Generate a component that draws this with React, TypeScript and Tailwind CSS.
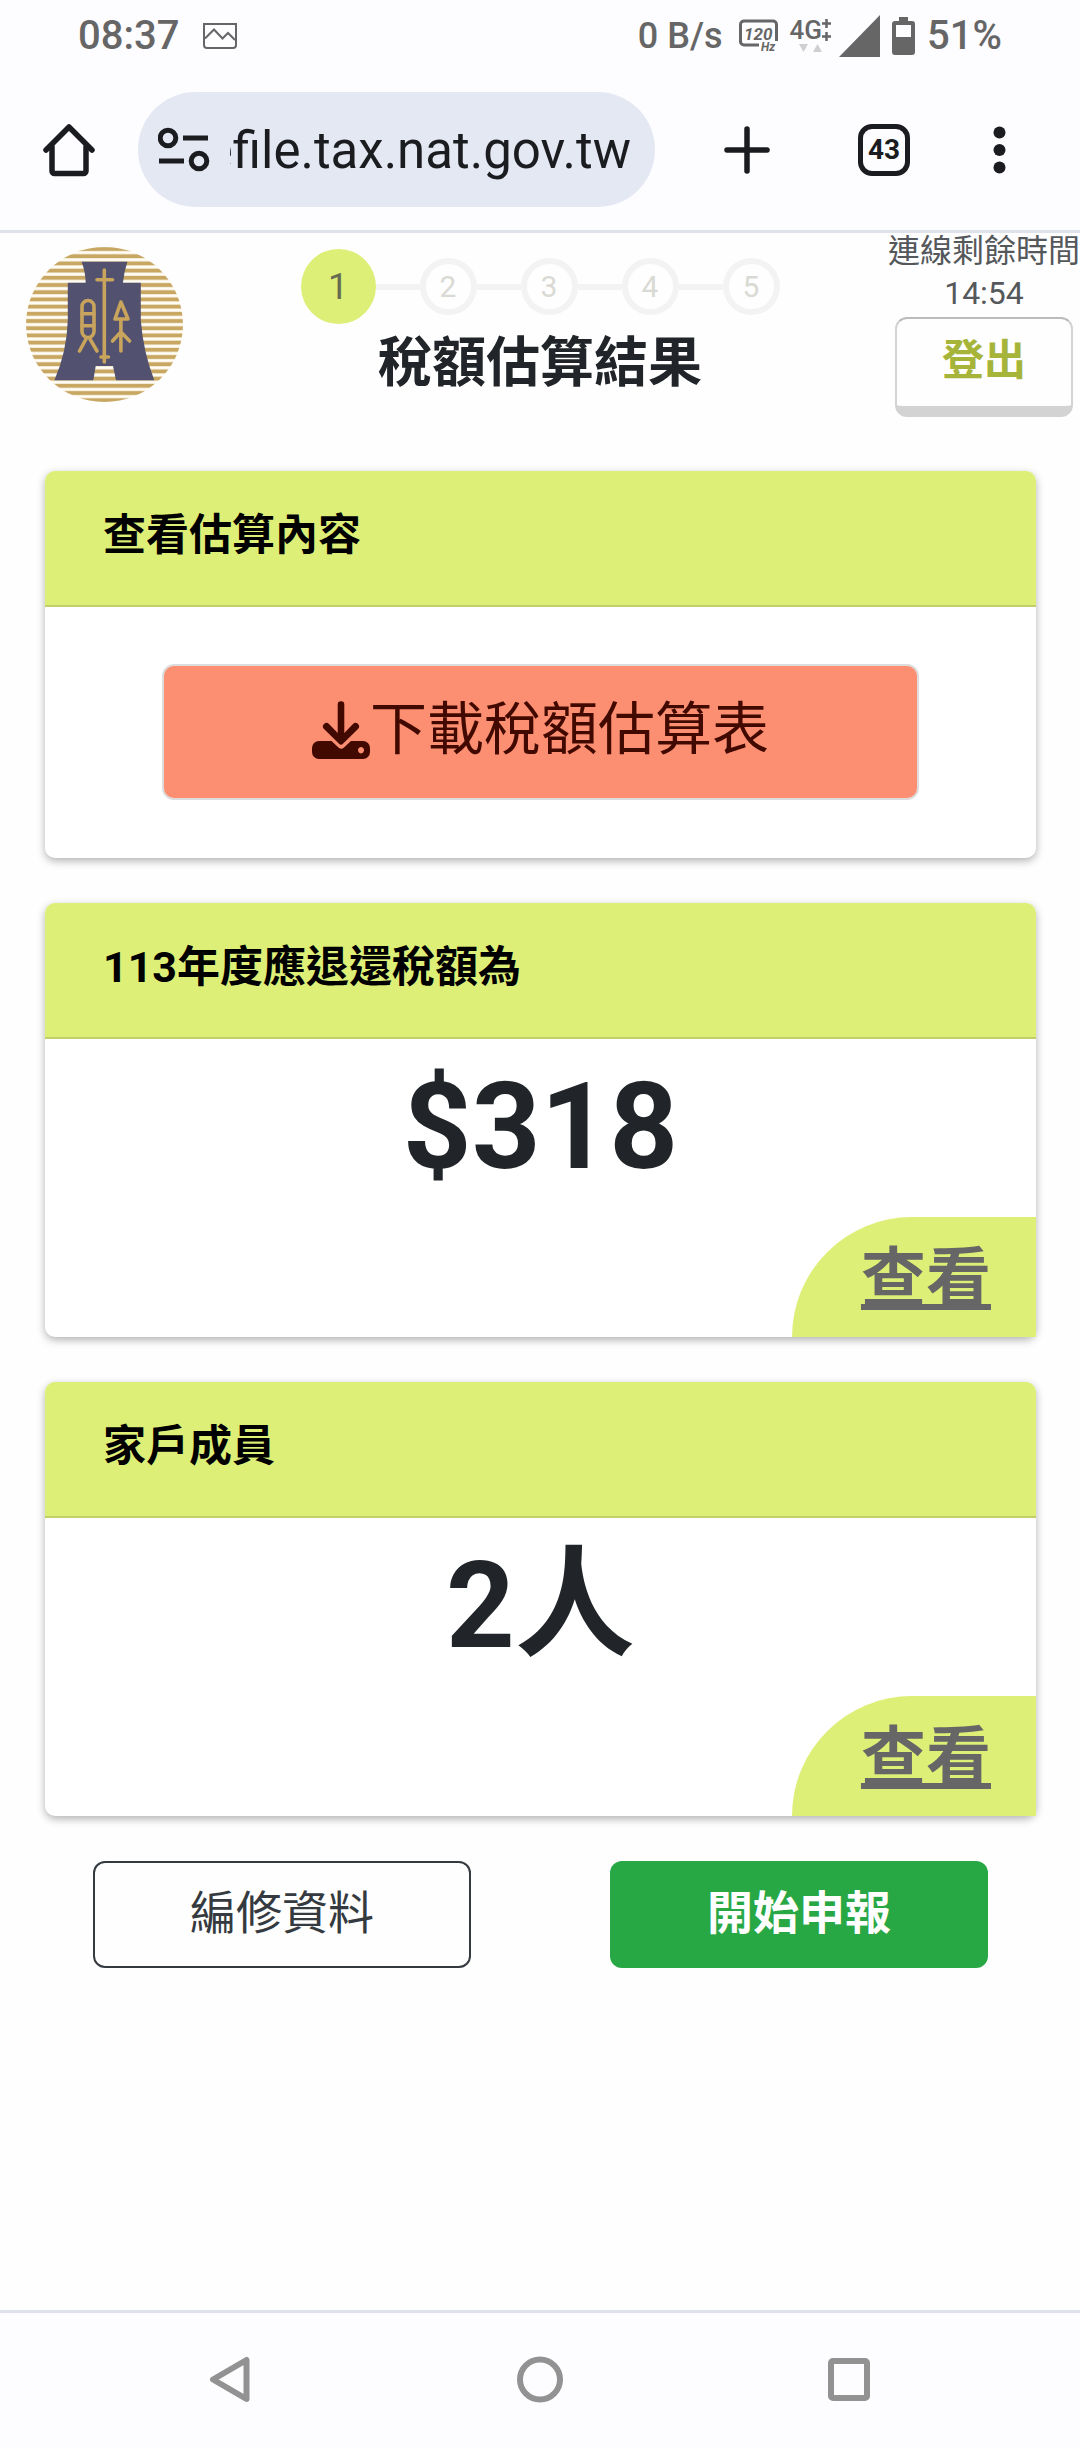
import type { ReactNode } from 'react'

const steps = [1, 2, 3, 4, 5]
const currentStep = 1

function StatusBar() {
  return (
    <div className="flex items-center justify-between pt-3 pr-[78px] pl-[78px] text-[#666666]">
      <div className="flex h-12 items-center gap-6">
        <span className="text-[40px] leading-[48px] font-medium">08:37</span>
        <svg width="34" height="26" viewBox="0 0 34 26" fill="none" stroke="currentColor" strokeWidth="2">
          <path d="M1 1h32v21a3 3 0 0 1-3 3H4a3 3 0 0 1-3-3z" />
          <path d="M2 15.500L11 6.500l8.500 9L25 10l7 7" />
        </svg>
      </div>
      <div className="flex h-12 items-center">
        <span className="text-[36px] leading-[48px] font-medium">0 B/s</span>
        <svg className="ml-4" width="39" height="34" viewBox="0 0 39 34" fill="none">
          <path d="M20 26H5a3.500 3.500 0 0 1-3.500-3.500v-17A3.500 3.500 0 0 1 5 2h29a3.500 3.500 0 0 1 3.500 3.500V22" stroke="currentColor" strokeWidth="3" />
          <text x="5" y="20.500" fontSize="17" fontWeight="700" fontStyle="italic" fill="currentColor">120</text>
          <text x="22" y="32" fontSize="12" fontWeight="700" fontStyle="italic" fill="currentColor">Hz</text>
        </svg>
        <div className="ml-3 flex flex-col items-center pb-1">
          <span className="flex items-center text-[26px] leading-7 font-medium">
            4G
            <svg width="9" height="24" viewBox="0 0 9 24" stroke="currentColor" strokeWidth="2.500" fill="none">
              <path d="M4.500 1v9M0 5.500h9M4.500 14v9M0 18.500h9" />
            </svg>
          </span>
          <svg width="23" height="8" viewBox="0 0 23 8" fill="#cfcfcf">
            <path d="M0 0h9L4.500 8zM14 8h9L18.500 0z" />
          </svg>
        </div>
        <svg className="ml-2" width="41" height="42" viewBox="0 0 41 42" fill="currentColor">
          <path d="M41 0v42H0z" />
        </svg>
        <svg className="ml-3" width="23" height="38" viewBox="0 0 23 38" fill="currentColor" fillRule="evenodd">
          <path d="M7 0h9v4h4a3 3 0 0 1 3 3v28a3 3 0 0 1-3 3H3a3 3 0 0 1-3-3V7a3 3 0 0 1 3-3h4zM4 8v12h15V8z" />
        </svg>
        <span className="ml-3 text-[40px] leading-[48px] font-medium">51%</span>
      </div>
    </div>
  )
}

function BrowserBar() {
  return (
    <div className="flex items-center pt-8 pr-[74px] pb-[23px] pl-[43px] text-[#1a1c20]">
      <button type="button" aria-label="首頁">
        <svg width="52" height="54" viewBox="0 0 52 54" fill="none" stroke="currentColor" strokeWidth="5.500" strokeLinejoin="round" strokeLinecap="round">
          <path d="M3 27L26 4l23 23" />
          <path d="M9 24v24a2.500 2.500 0 0 0 2.500 2.500h29A2.500 2.500 0 0 0 43 48V24" />
        </svg>
      </button>
      <div className="ml-[43px] flex h-[115px] min-w-0 flex-1 items-center rounded-full bg-[#e4e8f2] pr-6 pl-5">
        <svg className="shrink-0" width="52" height="46" viewBox="0 0 52 46" fill="none" stroke="currentColor" strokeWidth="5">
          <circle cx="10" cy="11" r="7.800" />
          <path d="M25 11h25M1 34h25" />
          <circle cx="41" cy="34" r="7.800" />
        </svg>
        <input
          type="text"
          aria-label="網址"
          dir="rtl"
          readOnly
          value="efile.tax.nat.gov.tw"
          className="mt-1 ml-5 h-16 w-full min-w-0 bg-transparent text-[51px] outline-none"
        />
      </div>
      <button type="button" aria-label="新分頁" className="ml-[69px]">
        <svg width="46" height="48" viewBox="0 0 46 48" stroke="currentColor" strokeWidth="5.500" strokeLinecap="round">
          <path d="M23 3v42M3 24h40" />
        </svg>
      </button>
      <button
        type="button"
        aria-label="分頁"
        className="ml-[88px] flex h-[52px] w-[52px] items-center justify-center rounded-[14px] border-[5px] border-current text-[28px] leading-8 font-bold"
      >
        43
      </button>
      <button type="button" aria-label="選單" className="ml-[83px]">
        <svg width="13" height="48" viewBox="0 0 13 48" fill="currentColor">
          <circle cx="6.500" cy="6.500" r="6" />
          <circle cx="6.500" cy="24" r="6" />
          <circle cx="6.500" cy="41.500" r="6" />
        </svg>
      </button>
    </div>
  )
}

function Logo() {
  return (
    <svg width="158" height="158" viewBox="0 0 158 158" role="img" aria-label="財政部">
      <defs>
        <clipPath id="disc">
          <ellipse cx="78.500" cy="78.500" rx="78.500" ry="77.500" />
        </clipPath>
        <pattern id="stripes" width="158" height="7.200" y="-0.600" patternUnits="userSpaceOnUse">
          <rect width="158" height="7.200" fill="#fffdf5" />
          <rect y="1.600" width="158" height="4" fill="#c8a762" />
        </pattern>
      </defs>
      <rect width="158" height="158" fill="url(#stripes)" clipPath="url(#disc)" />
      <path
        d="M55.600 15.700H101.400Q98 26 96.900 36.700H114.800V74Q117 105 128.300 134.300H90L87 120H69.700L67.300 134.300H28.400Q41 105 41.800 74V36.700H59.700Q59.500 26 55.600 15.700z"
        fill="#525170"
      />
      <g fill="none" stroke="#c8a45c" strokeWidth="3.600" strokeLinecap="round" strokeLinejoin="round">
        <path d="M78.300 24V116M71 33.700h15.500M75 111h7.500" />
        <rect x="56" y="54.500" width="12" height="37" rx="6" />
        <path d="M56 67.700h12M56 79.700h12M60 93L53.500 105M64 93L71 105" />
        <path d="M94.900 56L89 73h13zM94.900 73v32M86.500 95l8.400-9 8.700 9" />
      </g>
    </svg>
  )
}

function SiteHeader() {
  return (
    <header className="grid grid-cols-[1fr_auto_1fr] items-start">
      <div className="pt-[13px] pl-[26px]">
        <Logo />
      </div>
      <div className="flex flex-col items-center pt-4">
        <ol className="flex items-center">
          {steps.map((step) => (
            <li key={step} className="flex items-center">
              {step > 1 && <span className="h-[6px] w-11 bg-[#f3f3f3]" />}
              {step === currentStep ? (
                <span className="flex h-[75px] w-[75px] items-center justify-center rounded-full bg-[#ddef76] text-[36px] text-[#666b51]">
                  {step}
                </span>
              ) : (
                <span className="flex h-[57px] w-[57px] items-center justify-center rounded-full border-[6px] border-[#f3f3f3] text-[30px] text-[#d9dad3]">
                  {step}
                </span>
              )}
            </li>
          ))}
        </ol>
        <h1 className="text-[54px] leading-[80px] font-bold">稅額估算結果</h1>
      </div>
      <div className="flex flex-col items-center justify-self-end whitespace-nowrap">
        <span className="text-[32px] leading-9 text-[#55585b]">連線剩餘時間</span>
        <span className="text-[32px] leading-[48px] text-[#55585b]">14:54</span>
        <button
          type="button"
          className="flex h-[100px] w-[178px] items-center justify-center rounded-xl border-2 border-b-[11px] border-[#d3d3d3] border-t-[#bbbbbb] pb-1 text-[42px] leading-[56px] font-bold text-[#a6b43a]"
        >
          登出
        </button>
      </div>
    </header>
  )
}

function Card({ title, children }: { title: string; children: ReactNode }) {
  return (
    <section className="rounded-[10px] bg-white shadow-[0_3px_8px_rgba(0,0,0,0.3)]">
      <h2 className="h-[136px] rounded-t-[10px] border-b-2 border-[#c3cf69] bg-[#ddef76] px-[58px] pt-[34px] text-[43px] leading-[60px] font-bold text-black">
        {title}
      </h2>
      {children}
    </section>
  )
}

function ResultCard({ title, value }: { title: string; value: string }) {
  return (
    <Card title={title}>
      <p className="pt-[18px] text-center text-[120px] leading-[140px] font-bold">{value}</p>
      <div className="mt-5 flex justify-end">
        <a
          href="#"
          className="flex h-[120px] w-[244px] items-center justify-center rounded-tl-[120px] bg-[#ddef76] pt-1 pl-6 text-[65px] leading-[96px] font-bold text-[#666666] underline decoration-[6px]"
        >
          查看
        </a>
      </div>
    </Card>
  )
}

function NavBar() {
  return (
    <nav className="flex items-center justify-between border-t-[3px] border-[#dfe2eb] bg-[#fdfcff] px-[208px] pt-[43px] pb-[45px] text-[#929292]">
      <button type="button" aria-label="返回">
        <svg width="46" height="47" viewBox="0 0 46 47" fill="none" stroke="currentColor" strokeWidth="6" strokeLinejoin="round">
          <path d="M38.500 4v39L5 23.500z" />
        </svg>
      </button>
      <button type="button" aria-label="主畫面">
        <svg width="46" height="47" viewBox="0 0 46 47" fill="none" stroke="currentColor" strokeWidth="6">
          <circle cx="23" cy="23.500" r="20" />
        </svg>
      </button>
      <button type="button" aria-label="最近使用">
        <svg width="46" height="47" viewBox="0 0 46 47" fill="none" stroke="currentColor" strokeWidth="6">
          <rect x="5" y="5" width="36" height="37" rx="2" />
        </svg>
      </button>
    </nav>
  )
}

export default function App() {
  return (
    <div className="flex min-h-screen flex-col bg-[#fefefe] font-[Roboto,'Noto_Sans_CJK_TC',sans-serif] text-[#212529]">
      <div className="border-b-[3px] border-[#dfe2eb] bg-[#fdfcff]">
        <StatusBar />
        <BrowserBar />
      </div>

      <SiteHeader />

      <main className="flex flex-1 flex-col gap-[45px] pt-[54px] pr-11 pb-10 pl-[45px]">
        <Card title="查看估算內容">
          <div className="px-[117px] pt-[57px] pb-[58px]">
            <button
              type="button"
              className="flex h-[136px] w-full items-center justify-center rounded-xl border-2 border-[#dddddd] bg-[#fc8f72] pb-1 text-[57px] leading-[72px] text-[#420900]"
            >
              <svg width="58" height="60" viewBox="0 0 58 60" fill="currentColor" fillRule="evenodd">
                <path d="M7 41h12.500l7 6.500a4 4 0 0 0 5.500 0l7-6.500H51a7 7 0 0 1 7 7v4a7 7 0 0 1-7 7H7a7 7 0 0 1-7-7v-4a7 7 0 0 1 7-7zM49 47a3 3.200 0 1 0 .01 0z" />
                <path d="M25.700 4.500a3.300 3.300 0 0 1 6.600 0V33l8.700-9a3.400 3.400 0 0 1 5 5L31.200 43.500a3 3 0 0 1-4.400 0L12 29a3.400 3.400 0 0 1 5-5l8.700 9z" />
              </svg>
              下載稅額估算表
            </button>
          </div>
        </Card>

        <ResultCard title="113年度應退還稅額為" value="$318" />
        <ResultCard title="家戶成員" value="2人" />

        <div className="flex justify-between px-12">
          <button
            type="button"
            className="flex h-[107px] w-[378px] items-center justify-center rounded-xl border-2 border-[#343a40] pb-1 text-[46px] leading-[64px] text-[#343a40]"
          >
            編修資料
          </button>
          <button
            type="button"
            className="flex h-[107px] w-[378px] items-center justify-center rounded-xl bg-[#28a745] pb-1 text-[46px] leading-[64px] font-bold text-white"
          >
            開始申報
          </button>
        </div>
      </main>

      <NavBar />
    </div>
  )
}
